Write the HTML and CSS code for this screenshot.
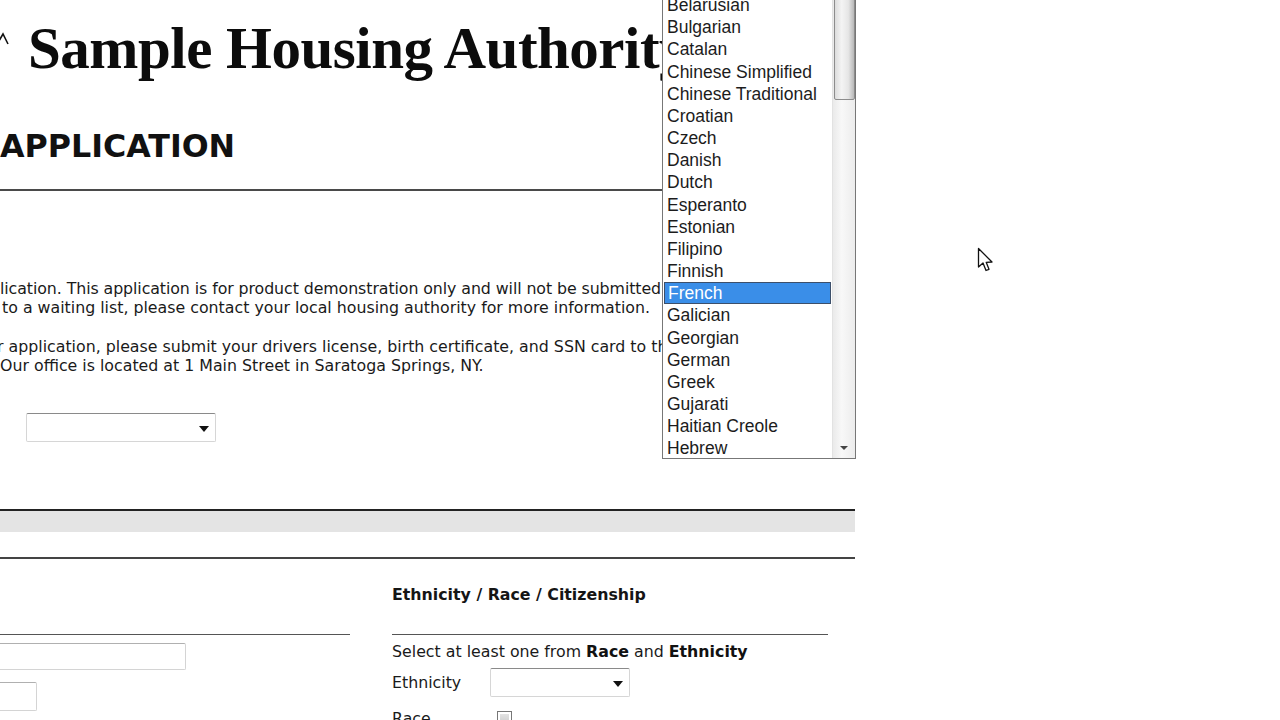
FILE: index.html
```html
<!DOCTYPE html>
<html lang="en">
<head>
<meta charset="utf-8">
<title>Sample Housing Authority - Application</title>
<link rel="stylesheet" href="styles.css">
</head>
<body>
<div class="page">
  <header class="title-row">
    <svg class="logo" width="10" height="30" viewBox="0 0 10 30" aria-hidden="true">
      <path d="M-4 22 L3 10 L8 20" fill="none" stroke="#111" stroke-width="1.6"/>
    </svg>
    <h1 class="title">Sample Housing Authority</h1>
  </header>
  <h2 class="app-title">APPLICATION</h2>
  <div class="rule"></div>

  <div class="intro">
    <div class="line line-1">lication. This application is for product demonstration only and will not be submitted</div>
    <div class="line line-2">to a waiting list, please contact your local housing authority for more information.</div>
    <div class="line line-3 gap">your application, please submit your drivers license, birth certificate, and SSN card to the</div>
    <div class="line">Our office is located at 1 Main Street in Saratoga Springs, NY.</div>
  </div>

  <div class="lang-row">
    <div class="select lang-select"><span class="caret"></span></div>
  </div>

  <div class="band">
    <div class="band-fill"></div>
    <div class="band-gap"></div>
  </div>

  <div class="columns">
    <section class="col col-left">
      <div class="col-head"></div>
      <div class="input input-wide"></div>
      <div class="input input-short"></div>
    </section>
    <section class="col col-right">
      <div class="col-head"><h3 class="col-title">Ethnicity / Race / Citizenship</h3></div>
      <p class="hint">Select at least one from <b>Race</b> and <b>Ethnicity</b></p>
      <div class="field-row">
        <span class="label">Ethnicity</span>
        <div class="select eth-select"><span class="caret"></span></div>
      </div>
      <div class="field-row race-row">
        <span class="label">Race</span>
        <span class="checkbox"></span>
      </div>
    </section>
  </div>
</div>

<div class="dropdown">
  <ul class="options">
    <li>Basque</li>
    <li>Belarusian</li>
    <li>Bulgarian</li>
    <li>Catalan</li>
    <li>Chinese Simplified</li>
    <li>Chinese Traditional</li>
    <li>Croatian</li>
    <li>Czech</li>
    <li>Danish</li>
    <li>Dutch</li>
    <li>Esperanto</li>
    <li>Estonian</li>
    <li>Filipino</li>
    <li>Finnish</li>
    <li class="selected">French</li>
    <li>Galician</li>
    <li>Georgian</li>
    <li>German</li>
    <li>Greek</li>
    <li>Gujarati</li>
    <li>Haitian Creole</li>
    <li>Hebrew</li>
  </ul>
  <div class="scrollbar">
    <div class="thumb"></div>
    <span class="down-arrow"></span>
  </div>
</div>

<svg class="cursor" width="20" height="28" viewBox="0 0 20 28" aria-hidden="true">
  <path d="M1.5 1.5 L1.5 20 L6 16 L9 23.5 L12 22.3 L9.2 15.3 L15 15 Z" fill="#fff" stroke="#111" stroke-width="1.3" stroke-linejoin="round"/>
</svg>
</body>
</html>
```
FILE: styles.css
```css
html, body {
  margin: 0;
  padding: 0;
  background: #fff;
}
body {
  width: 1280px;
  height: 720px;
  overflow: hidden;
  position: relative;
  font-family: "DejaVu Sans", Verdana, sans-serif;
  font-size: 15.8px;
  color: #111;
}
.page {
  width: 855px;
}
.title-row {
  display: flex;
  align-items: center;
  height: 96px;
}
.logo {
  flex: none;
  width: 10px;
  height: 30px;
  margin-top: -18px;
}
.title {
  margin: 0 0 0 18px;
  font-family: "Liberation Serif", "Times New Roman", serif;
  font-weight: bold;
  font-size: 59px;
  letter-spacing: -0.5px;
  line-height: 96px;
  white-space: nowrap;
  color: #0c0c0c;
}
.app-title {
  margin: 30px 0 0 0;
  font-size: 31.7px;
  line-height: 40px;
  font-weight: bold;
  color: #111;
}
.rule {
  margin-top: 23px;
  height: 2px;
  background: #4a4a4a;
}
.intro {
  margin-top: 88px;
  line-height: 19px;
  color: #1a1a1a;
}
.line {
  white-space: nowrap;
}
.line-1 {
  letter-spacing: -0.08px;
}
.line-2 {
  padding-left: 2px;
}
.line-3 {
  text-indent: -32px;
}
.gap {
  margin-top: 20px;
}
.lang-row {
  margin-top: 38px;
  padding-left: 26px;
}
.select {
  position: relative;
  box-sizing: border-box;
  height: 29px;
  border: 1px solid #d6d6d6;
  border-top-color: #8a8a8a;
  border-radius: 2px;
  background: #fff;
}
.lang-select {
  width: 190px;
}
.caret {
  position: absolute;
  right: 6px;
  top: 12px;
  width: 0;
  height: 0;
  border-left: 5px solid transparent;
  border-right: 5px solid transparent;
  border-top: 6px solid #111;
}
.band {
  margin-top: 67px;
}
.band-fill {
  height: 21px;
  border-top: 2px solid #222;
  background: #e4e4e4;
}
.band-gap {
  height: 25px;
  border-bottom: 2px solid #444;
}
.columns {
  display: grid;
  grid-template-columns: 350px 436px;
  column-gap: 42px;
}
.col-head {
  box-sizing: border-box;
  height: 76px;
  padding-top: 26px;
  border-bottom: 1px solid #555;
}
.col-title {
  margin: 0;
  font-size: 15.8px;
  line-height: 19px;
  font-weight: bold;
  color: #151515;
}
.input {
  box-sizing: border-box;
  border: 1px solid #d4d4d4;
  border-top-color: #b0b0b0;
  border-radius: 2px;
  margin-left: -100px;
}
.input-wide {
  width: 286px;
  height: 27px;
  margin-top: 8px;
}
.input-short {
  width: 137px;
  height: 29px;
  margin-top: 12px;
}
.hint {
  margin: 7px 0 0 0;
  line-height: 19px;
  color: #1a1a1a;
}
.hint b {
  color: #111;
}
.field-row {
  display: flex;
  align-items: center;
  margin-top: 7px;
}
.label {
  width: 98px;
  line-height: 19px;
  color: #1a1a1a;
}
.eth-select {
  width: 140px;
}
.race-row {
  margin-top: 12px;
}
.checkbox {
  box-sizing: border-box;
  width: 15px;
  height: 15px;
  margin-left: 7px;
  border: 1px solid #777;
  background: linear-gradient(#e8e8e8, #c8c8c8);
  box-shadow: inset 0 0 0 2px #fff;
}
.dropdown {
  position: absolute;
  left: 662px;
  top: -29px;
  width: 194px;
  height: 488px;
  box-sizing: border-box;
  border: 1px solid #777;
  background: #fff;
  display: flex;
  overflow: hidden;
}
.options {
  list-style: none;
  margin: 0;
  padding: 0;
  flex: 1;
  font-family: "Liberation Sans", Arial, sans-serif;
  font-size: 17.5px;
  color: #1c1c1c;
}
.options li {
  box-sizing: border-box;
  height: 22.16px;
  line-height: 22.16px;
  padding-left: 4px;
  margin-right: 1px;
  white-space: nowrap;
}
.options li.selected {
  margin-left: 1px;
  padding-left: 3px;
  background: #3a8ee8;
  border: 1px solid #3c4f6a;
  line-height: 20.16px;
  color: #fff;
}
.scrollbar {
  position: relative;
  width: 22px;
  flex: none;
  background: linear-gradient(90deg, #eaeaea, #f8f8f8 40%, #ececec);
  border-left: 1px solid #e2e2e2;
}
.thumb {
  margin: 0 0 0 1px;
  height: 128px;
  box-sizing: border-box;
  border: 1px solid #8c8c8c;
  border-radius: 2px;
  background: linear-gradient(90deg, #dcdcdc, #f4f4f4 35%, #e6e6e6 70%, #b8b8b8);
}
.down-arrow {
  position: absolute;
  left: 7px;
  bottom: 8px;
  width: 0;
  height: 0;
  border-left: 4px solid transparent;
  border-right: 4px solid transparent;
  border-top: 4px solid #444;
}
.cursor {
  position: absolute;
  left: 977px;
  top: 247px;
}
```
